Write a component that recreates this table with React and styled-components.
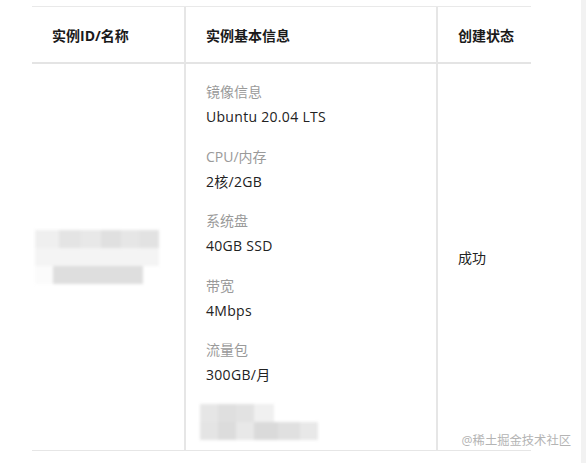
import React from "react"
import styled, { createGlobalStyle } from "styled-components"

const GlobalStyle = createGlobalStyle`
  html, body {
    margin: 0;
    padding: 0;
    background: #fff;
  }
  body {
    font-family: "Open Sans", "Noto Sans CJK SC", sans-serif;
    font-size: 14px;
    color: #333;
  }
`

const specs = [
  { label: "镜像信息", value: "Ubuntu 20.04 LTS" },
  { label: "CPU/内存", value: "2核/2GB" },
  { label: "系统盘", value: "40GB SSD" },
  { label: "带宽", value: "4Mbps" },
  { label: "流量包", value: "300GB/月" },
]

const App = () => {
  return (
    <Page>
      <GlobalStyle />
      <Content>
        <Table>
          <HeadCell>实例ID/名称</HeadCell>
          <HeadCell divided>实例基本信息</HeadCell>
          <HeadCell divided>创建状态</HeadCell>

          <Cell center>
            <Mosaic>
              <MosaicRow>
                <Tile shade="#efefef" w={24} />
                <Tile shade="#e4e4e4" w={22} />
                <Tile shade="#e8e8e8" w={20} />
                <Tile shade="#e0e0e0" w={20} />
                <Tile shade="#e6e6e6" w={18} />
                <Tile shade="#e2e2e2" w={20} />
              </MosaicRow>
              <MosaicRow>
                <Tile shade="#f4f4f4" w={124} />
              </MosaicRow>
              <MosaicRow>
                <Tile shade="#fbfbfb" w={18} />
                <Tile shade="#dedede" w={90} />
              </MosaicRow>
            </Mosaic>
          </Cell>
          <Cell divided>
            <SpecList>
              {specs.map((s) => (
                <Spec key={s.label}>
                  <Label>{s.label}</Label>
                  <Value>{s.value}</Value>
                </Spec>
              ))}
            </SpecList>
            <Mosaic small>
              <MosaicRow>
                <Tile shade="#e6e6e6" w={18} />
                <Tile shade="#dfdfdf" w={18} />
                <Tile shade="#e2e2e2" w={18} />
                <Tile shade="#f0f0f0" w={20} />
              </MosaicRow>
              <MosaicRow>
                <Tile shade="#e4e4e4" w={18} />
                <Tile shade="#dcdcdc" w={18} />
                <Tile shade="#e8e8e8" w={18} />
                <Tile shade="#dadada" w={24} />
                <Tile shade="#e0e0e0" w={22} />
                <Tile shade="#e8e8e8" w={18} />
              </MosaicRow>
            </Mosaic>
          </Cell>
          <Cell divided center>成功</Cell>
        </Table>
        <Watermark>@稀土掘金技术社区</Watermark>
      </Content>
      <Track />
    </Page>
  )
}

const Page = styled.div`
  display: flex;
  width: 100vw;
  height: 100vh;
  overflow: hidden;
`

const Content = styled.div`
  position: relative;
  flex: 1;
  padding: 6px 0 0 32px;
`

const Track = styled.div`
  width: 5px;
  background: #f2f2f2;
`

const Table = styled.div`
  display: grid;
  grid-template-columns: 152px 252px 95px;
  grid-template-rows: 57px 386px;
  width: 499px;
  border-top: 1px solid #e9e9e9;
  border-bottom: 1px solid #e6e6e6;
`

const HeadCell = styled.div`
  display: flex;
  align-items: center;
  padding-left: 20px;
  font-weight: 700;
  color: #1a1a1a;
  border-bottom: 2px solid #e4e4e4;
  border-left: ${(p) => (p.divided ? "2px solid #e6e6e6" : "none")};
`

const Cell = styled.div`
  display: flex;
  flex-direction: column;
  justify-content: ${(p) => (p.center ? "center" : "flex-start")};
  padding: ${(p) => (p.center ? "0 0 0 20px" : "15px 0 0 20px")};
  border-left: ${(p) => (p.divided ? "2px solid #e6e6e6" : "none")};
  color: #222;
`

const SpecList = styled.div`
  display: flex;
  flex-direction: column;
  gap: 14.6px;
`

const Spec = styled.div`
  display: flex;
  flex-direction: column;
  line-height: 25px;
`

const Label = styled.div`
  color: #9a9a9a;
`

const Value = styled.div`
  color: #222;
  letter-spacing: 0.3px;
`

const Mosaic = styled.div`
  display: flex;
  flex-direction: column;
  margin: ${(p) => (p.small ? "17px 0 0 -6px" : "0 0 0 -17px")};
  filter: blur(1.5px);
`

const MosaicRow = styled.div`
  display: flex;
`

const Tile = styled.div`
  width: ${(p) => p.w}px;
  height: 18px;
  background: ${(p) => p.shade};
`

const Watermark = styled.div`
  position: absolute;
  right: 10px;
  top: 431px;
  font-size: 12.3px;
  color: #b4b4b4;
`

export default App
